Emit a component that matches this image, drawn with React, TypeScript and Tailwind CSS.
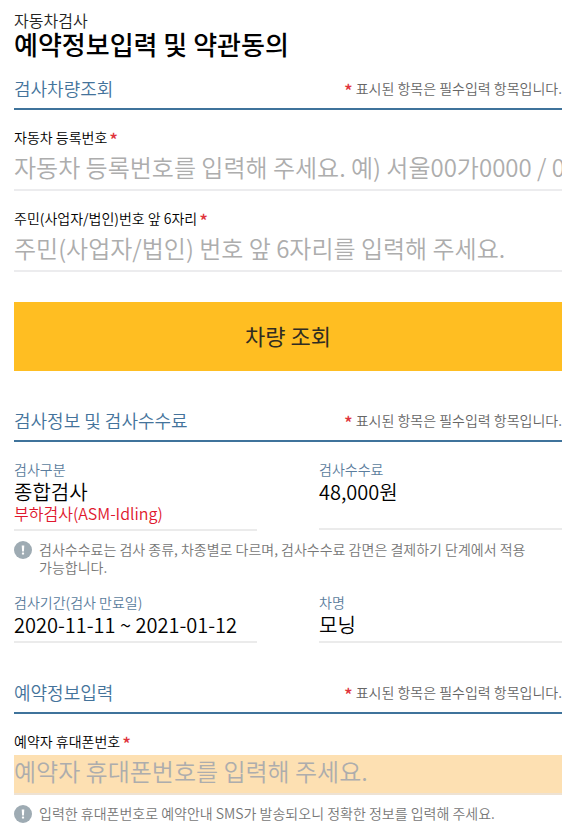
import type { ReactNode } from 'react';

function Required({ className = '' }: { className?: string }) {
  return (
    <span className={`inline-block translate-y-1 text-[18px] leading-3 font-medium text-[#e0343c] ${className}`}>
      *
    </span>
  );
}

function SectionHeader({ title }: { title: string }) {
  return (
    <div className="flex h-[41px] items-start justify-between border-b-2 border-[#3f739b] text-[#44739b]">
      <h2 className="text-[18px] leading-[38px]">{title}</h2>
      <p className="text-sm leading-[38px] text-[#666]">
        <Required className="mr-[3px]" />
        표시된 항목은 필수입력 항목입니다.
      </p>
    </div>
  );
}

interface FieldProps {
  label: string;
  placeholder: string;
  highlight?: boolean;
}

function Field({ label, placeholder, highlight = false }: FieldProps) {
  return (
    <label className="block">
      <span className="block h-5 text-sm leading-[18px] text-black">
        {label}
        <Required className="ml-0.5" />
      </span>
      <input
        type="text"
        placeholder={placeholder}
        className={`mt-[3px] block h-10 w-full border-b-2 pb-2 text-2xl outline-none placeholder:text-[#adadad] placeholder:opacity-100 ${
          highlight ? 'border-[#eee2d3] bg-[#fde0b2]' : 'border-[#ececee] bg-white'
        }`}
      />
    </label>
  );
}

interface InfoProps {
  label: string;
  value: string;
  className: string;
  children?: ReactNode;
}

function Info({ label, value, className, children }: InfoProps) {
  return (
    <div className={`w-[243px] border-b-2 border-[#ebebeb] ${className}`}>
      <dt className="text-sm leading-5 text-[#5b7d9d]">{label}</dt>
      <dd className="text-xl leading-[26px] text-black">
        {value}
        {children}
      </dd>
    </div>
  );
}

function Notice({ children }: { children: ReactNode }) {
  return (
    <div className="flex gap-[7px]">
      <svg className="h-[18px] w-[18px] shrink-0" viewBox="0 0 18 18">
        <circle cx="9" cy="9" r="9" fill="#9eabb3" />
        <path d="M7.7 4.6h2.6l-.4 5.8H8.1z" fill="#fff" />
        <rect x="7.9" y="11.4" width="2.2" height="2.1" rx=".6" fill="#fff" />
      </svg>
      <p className="-mt-px mb-px text-sm leading-[18px] text-[#777]">{children}</p>
    </div>
  );
}

export default function App() {
  return (
    <main className="h-[840px] w-[573px] overflow-hidden bg-white pt-[11px] pr-[11px] pl-3.5 font-['Noto_Sans_CJK_KR','Noto_Sans',sans-serif] font-[350]">
      <header>
        <p className="text-base leading-[18px] text-[#222]">자동차검사</p>
        <h1 className="text-[26px] leading-[30px] font-medium text-black">예약정보입력 및 약관동의</h1>
      </header>

      <section className="mt-2.5">
        <SectionHeader title="검사차량조회" />
        <div className="mt-[18px] space-y-[18px]">
          <Field
            label="자동차 등록번호"
            placeholder="자동차 등록번호를 입력해 주세요. 예) 서울00가0000 / 00가0000"
          />
          <Field
            label="주민(사업자/법인)번호 앞 6자리"
            placeholder="주민(사업자/법인) 번호 앞 6자리를 입력해 주세요."
          />
        </div>
        <button
          type="button"
          className="mt-[30px] block h-[69px] w-full bg-[#ffbe22] pb-0.5 text-[22px] font-normal text-[#302c22]"
        >
          차량 조회
        </button>
      </section>

      <section className="mt-[30px]">
        <SectionHeader title="검사정보 및 검사수수료" />
        <dl className="mt-[17px] flex items-start justify-between">
          <Info label="검사구분" value="종합검사" className="h-[72px]">
            <span className="block text-base leading-4 text-[#e0182d]">부하검사(ASM-Idling)</span>
          </Info>
          <Info label="검사수수료" value="48,000원" className="h-[71px]" />
        </dl>
        <div className="mt-[10px] pr-7">
          <Notice>검사수수료는 검사 종류, 차종별로 다르며, 검사수수료 감면은 결제하기 단계에서 적용 가능합니다.</Notice>
        </div>
        <dl className="mt-[15px] flex items-start justify-between">
          <Info label="검사기간(검사 만료일)" value="2020-11-11 ~ 2021-01-12" className="h-[51px]" />
          <Info label="차명" value="모닝" className="h-[51px]" />
        </dl>
      </section>

      <section className="mt-[30px]">
        <SectionHeader title="예약정보입력" />
        <div className="mt-[18px]">
          <Field label="예약자 휴대폰번호" placeholder="예약자 휴대폰번호를 입력해 주세요." highlight />
        </div>
        <div className="mt-[10px]">
          <Notice>입력한 휴대폰번호로 예약안내 SMS가 발송되오니 정확한 정보를 입력해 주세요.</Notice>
        </div>
      </section>
    </main>
  );
}
